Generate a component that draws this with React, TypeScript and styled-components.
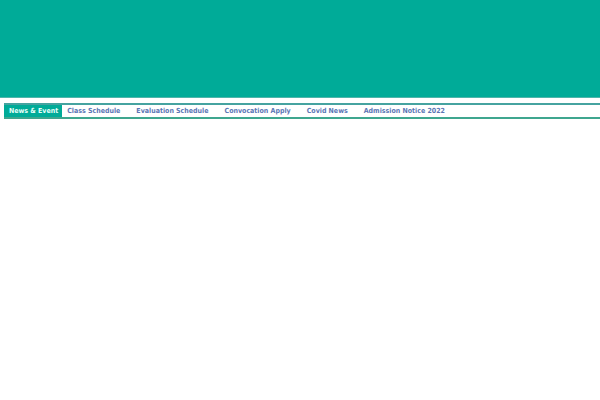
import React from 'react';
import styled, { createGlobalStyle } from 'styled-components'

interface NewsItem {
  title: string,
  href: string,
}

const items: NewsItem[] = [
  { title: 'Class Schedule', href: '#class-schedule' },
  { title: 'Evaluation Schedule', href: '#evaluation-schedule' },
  { title: 'Convocation Apply', href: '#convocation-apply' },
  { title: 'Covid News', href: '#covid-news' },
  { title: 'Admission Notice 2022', href: '#admission-notice-2022' },
]

const GlobalStyle = createGlobalStyle`
  body {
    margin: 0;
    background: #fff;
    font-family: 'DejaVu Sans Condensed', 'DejaVu Sans', Verdana, sans-serif;
    overflow-x: hidden;
  }
`

const Banner = styled.header`
  height: 97px;
  background: #00ab98;
  border-bottom: 1px solid #4fb5aa;
`

const NewsBar = styled.section`
  display: flex;
  margin: 5px 0 0 4px;
  border-top: 2px solid #46a3a0;
  border-bottom: 2px solid #3fa68f;
  font-size: 7px;
  line-height: 12px;
  font-weight: 700;
  white-space: nowrap;
`

const Label = styled.h2`
  margin: 0;
  padding: 0 4px 0 5px;
  background: #00ab98;
  color: #e6fffa;
  font-size: inherit;
  font-weight: inherit;
`

const Ticker = styled.nav`
  display: flex;
  flex: 1;
  gap: 16px;
  padding-left: 5px;
  overflow: hidden;
`

const NewsLink = styled.a`
  color: #5b76b5;
  text-decoration: none;
`

const App: React.FC = () => {
  return (
    <>
      <GlobalStyle />
      <Banner />
      <NewsBar>
        <Label>News &amp; Event</Label>
        <Ticker>
          {items.map((item) => (
            <NewsLink key={item.href} href={item.href}>{item.title}</NewsLink>
          ))}
        </Ticker>
      </NewsBar>
    </>
  )
}

export default App;
